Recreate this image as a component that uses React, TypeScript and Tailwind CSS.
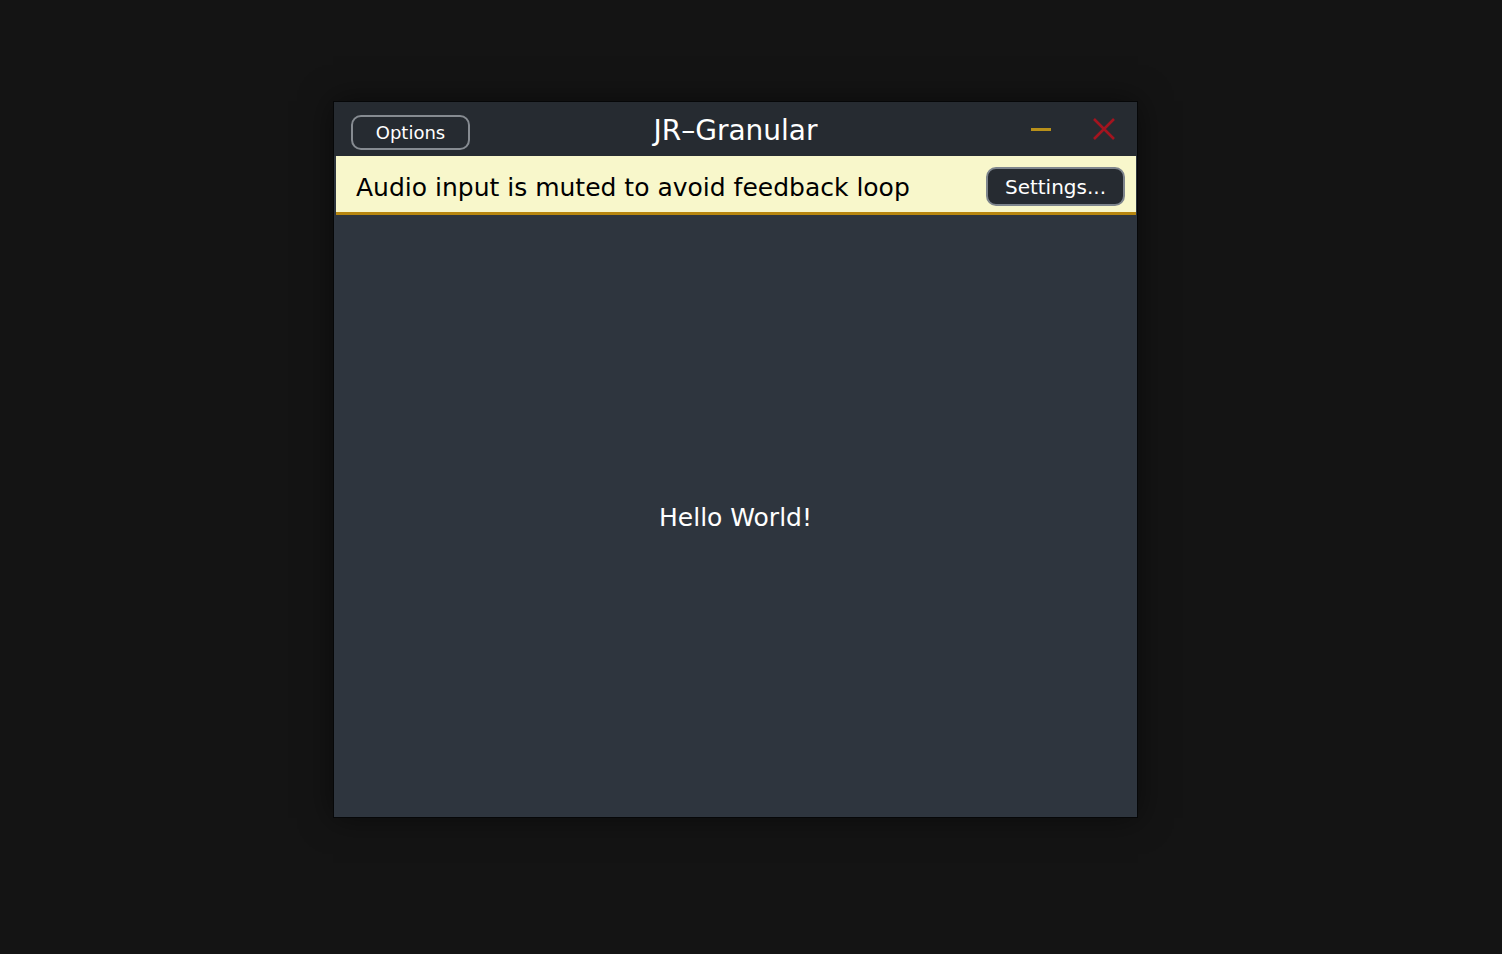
export default function App() {
  const font = { fontFamily: '"DejaVu Sans", "Noto Sans", sans-serif' };
  return (
    <div className="w-[1502px] h-[954px] bg-[#141414] pt-[101px] pl-[333px]" style={font}>
      <div className="w-[805px] h-[717px] border border-[#060708] bg-[#2e353e] flex flex-col shadow-[0_0_30px_rgba(0,0,0,0.5)]">
        <div className="h-[54px] bg-[#262b31] flex items-start pl-[17px] pr-[16px] relative">
          <button className="mt-[13px] w-[119px] h-[35px] rounded-[10px] border-2 border-[#868b91] text-white text-[18px] flex items-center justify-center">
            Options
          </button>
          <div className="absolute left-0 right-0 top-[8px] text-center text-white text-[28px] pointer-events-none">JR–Granular</div>
          <div className="ml-auto mt-[16px] flex items-center gap-[42px] pr-[6px]">
            <div className="w-[20px] h-[3px] bg-[#b8901a]" />
            <svg width="22" height="22" viewBox="0 0 22 22">
              <path d="M1 1 L21 21 M21 1 L1 21" stroke="#a3141f" strokeWidth="2.6" />
            </svg>
          </div>
        </div>
        <div className="ml-[2px] mr-[1px] h-[59px] bg-[#f8f7cb] border-b-[3px] border-[#b7860f] flex items-center pl-[20px] pr-[11px] pt-[4px]">
          <span className="text-black text-[25px] pt-[4px]">Audio input is muted to avoid feedback loop</span>
          <button className="ml-auto w-[139px] h-[39px] rounded-[10px] border-2 border-[#7e858d] bg-[#262b31] text-white text-[20px] flex items-center justify-center pt-[1px]">
            Settings...
          </button>
        </div>
        <div className="flex-1 flex items-center justify-center pt-[4px]">
          <span className="text-white text-[25px]">Hello World!</span>
        </div>
      </div>
    </div>
  );
}
